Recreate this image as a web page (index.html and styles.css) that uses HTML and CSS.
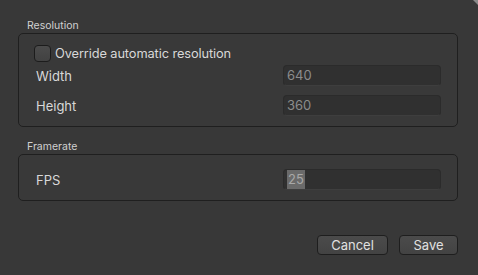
FILE: index.html
```html
<!DOCTYPE html>
<html lang="en">
<head>
  <meta charset="UTF-8">
  <title>Video Settings</title>
  <link rel="stylesheet" href="styles.css">
</head>
<body>
  <div class="corner"></div>

  <div class="dialog">
    <div class="group-title">Resolution</div>
    <div class="group">
      <label class="check-row">
        <span class="checkbox"></span>
        <span>Override automatic resolution</span>
      </label>
      <div class="field">
        <span class="field-label">Width</span>
        <span class="input">640</span>
      </div>
      <div class="field">
        <span class="field-label">Height</span>
        <span class="input">360</span>
      </div>
    </div>

    <div class="group-title second">Framerate</div>
    <div class="group framerate">
      <div class="field">
        <span class="field-label">FPS</span>
        <span class="input"><span class="selected">25</span></span>
      </div>
    </div>

    <div class="buttons">
      <button class="btn cancel">Cancel</button>
      <button class="btn save">Save</button>
    </div>
  </div>
</body>
</html>
```

FILE: styles.css
```css
* {
  margin: 0;
  padding: 0;
  box-sizing: border-box;
}

body {
  font-family: Inter, "Noto Sans", sans-serif;
  background-color: #383838;
  color: #d8d8d8;
  width: 478px;
  height: 275px;
  overflow: hidden;
  position: relative;
}

.corner {
  position: absolute;
  top: 0;
  right: 0;
  width: 0;
  height: 0;
  border-top: 5px solid #8a8a8a;
  border-left: 5px solid transparent;
}

.dialog {
  padding: 19px 20px 0 18px;
}

.group-title {
  font-size: 10.5px;
  line-height: 14px;
  padding-left: 9px;
  color: #d0d0d0;
}

.group-title.second {
  margin-top: 13px;
}

.group {
  border: 1px solid #1f1f1f;
  border-radius: 5px;
  background-color: #393939;
  padding: 11px 16px 10px 15px;
  display: flex;
  flex-direction: column;
}

.group.framerate {
  padding-top: 14px;
}

.check-row {
  display: flex;
  align-items: center;
  gap: 4px;
  font-size: 12.8px;
  letter-spacing: -0.1px;
  height: 17px;
  margin-bottom: 3px;
}

.checkbox {
  width: 17px;
  height: 17px;
  border: 1px solid #1c1c1c;
  border-radius: 4px;
  background: linear-gradient(#4b4b4b, #424242);
}

.field {
  display: flex;
  align-items: center;
  height: 21px;
}

.field + .field {
  margin-top: 9px;
}

.field-label {
  flex: 1;
  font-size: 13px;
  padding-left: 2px;
}

.input {
  width: 158px;
  height: 21px;
  background-color: #303030;
  border: 1px solid #2b2b2b;
  border-bottom-color: #3e3e3e;
  border-radius: 4px;
  font-size: 13px;
  line-height: 19px;
  color: #8c8c8c;
  padding-left: 3px;
}

.selected {
  background-color: #6a6a6a;
  color: #a8a8a8;
  display: inline-block;
  padding: 0 1px;
}

.buttons {
  display: flex;
  justify-content: flex-end;
  gap: 11px;
  margin-top: 34px;
}

.btn {
  font-family: inherit;
  font-size: 13px;
  color: #e0e0e0;
  height: 20px;
  border: 1px solid #1e1e1e;
  border-radius: 4px;
  background: linear-gradient(#4b4b4b, #434343);
  cursor: pointer;
}

.cancel {
  width: 71px;
}

.save {
  width: 59px;
}
```
